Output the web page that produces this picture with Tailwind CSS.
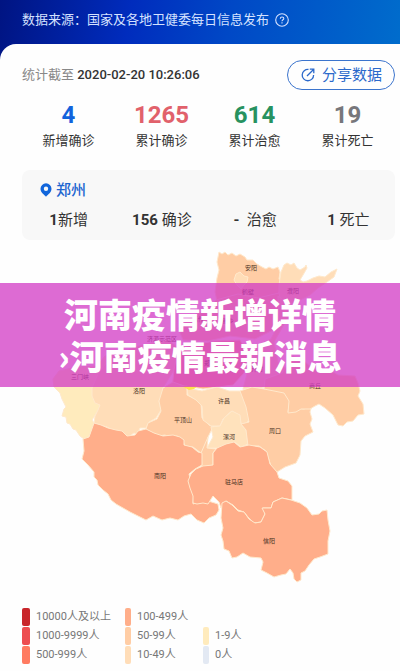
<!DOCTYPE html>
<html lang="zh-CN">
<head>
<meta charset="utf-8">
<meta name="viewport" content="width=device-width, initial-scale=1">
<title>河南疫情新增详情</title>
<script src="https://cdn.jsdelivr.net/npm/@tailwindcss/browser@4"></script>
</head>
<body class="bg-[#0030ad] font-[Roboto,'Noto_Sans_CJK_SC',sans-serif] text-[#333]">
<div class="relative min-h-screen bg-[linear-gradient(100deg,#001482_0px,#002cbd_130px,#0048c6_230px,#006ccc_400px)]">
  <header class="flex h-11 items-center gap-1.5 px-[22px] pb-1 text-[13px] text-[#d5e2ff]">
    <p>数据来源：国家及各地卫健委每日信息发布</p>
    <button type="button" aria-label="数据说明">
      <svg class="size-3.5" viewBox="0 0 14 14" fill="none" stroke="currentColor" stroke-width="1.1"><circle cx="7" cy="7" r="6.3"/><path d="M5.3 5.7c0-2.4 3.5-2.2 3.5-.2C8.800 6.800 7 6.800 7 8.300M7 9.300v1.200"/></svg>
    </button>
  </header>

  <main class="rounded-tl-2xl bg-[#fefefe] pt-4">
    <div class="flex items-center justify-between pr-[5px] pl-[22px]">
      <p class="text-[13px] text-[#888]">统计截至 <time class="font-medium text-[#333]" datetime="2020-02-20T10:26:06">2020-02-20 10:26:06</time></p>
      <button type="button" class="flex h-[30px] items-center gap-1.5 rounded-full border border-[#3b74cd] px-3 text-[15px] text-[#2b69cb]">
        <svg class="size-4" viewBox="0 0 16 16" fill="none" stroke="currentColor" stroke-width="1.300"><path d="M8.500 2.400A5.700 5.700 0 1 0 13.600 8M7 9 13.300 2.700M9.800 2.200h4v4"/></svg>
        分享数据
      </button>
    </div>

    <dl class="mt-[9px] grid grid-cols-4 pr-1.5 pl-[22px] text-center">
      <div class="flex flex-col-reverse"><dt class="text-[13px] leading-5">新增确诊</dt><dd class="text-2xl leading-8 font-bold text-[#1263dc]">4</dd></div>
      <div class="flex flex-col-reverse"><dt class="text-[13px] leading-5">累计确诊</dt><dd class="text-2xl leading-8 font-bold text-[#e1616b]">1265</dd></div>
      <div class="flex flex-col-reverse"><dt class="text-[13px] leading-5">累计治愈</dt><dd class="text-2xl leading-8 font-bold text-[#279260]">614</dd></div>
      <div class="flex flex-col-reverse"><dt class="text-[13px] leading-5">累计死亡</dt><dd class="text-2xl leading-8 font-bold text-[#77777b]">19</dd></div>
    </dl>

    <section class="mt-[19px] mr-[5px] ml-[22px] rounded-lg bg-[#f8f8f8] pt-2 pb-1.5">
      <h2 class="flex items-center gap-1 pl-[18px] text-[15px] leading-6 font-medium text-[#1e66d0]">
        <svg class="h-3.5 w-3" viewBox="0 0 12 14" fill="#1266db"><path fill-rule="evenodd" d="M6 .3A5.500 5.500 0 0 0 .5 5.800C.5 9.300 3.700 11.500 6 13.700 8.300 11.500 11.500 9.300 11.500 5.800A5.500 5.500 0 0 0 6 .3ZM6 3.600A2.200 2.200 0 1 1 6 8 2.200 2.200 0 0 1 6 3.600Z"/></svg>
        郑州
      </h2>
      <ul class="mt-1 grid grid-cols-4 text-center text-[15px] leading-7">
        <li><b>1</b>新增</li>
        <li><b>156</b> 确诊</li>
        <li><b>-</b>&nbsp; 治愈</li>
        <li><b>1</b> 死亡</li>
      </ul>
    </section>

    <svg class="block w-full" viewBox="0 240 400 364" role="img" aria-label="河南省疫情地图">
      <g stroke="#ffe9cc" stroke-width="1" stroke-linejoin="round">
        <polygon fill="#ffcda5" points="219,252 222,254 225,252 228,255 232,253 236,256 240,254 245,257 247,260 253,260 257,264 262,267 266,269 269,267 273,269 278,267 280,272 279,279 282,283 278,296 260,304 240,300 218,306 215,292 217,278 219,270 217,262"/>
        <polygon fill="#ffddb8" points="281,272 284,265 287,263 291,265 294,263 297,268 300,270 305,267 306,265 307,268 303,275 300,280 303,282 307,281 313,278 319,276 325,277 331,272 337,269 334,277 327,282 318,288 310,295 296,302 283,308 279,299 279,285"/>
        <polygon fill="#ffddb8" points="236,274 240,272 244,276 248,277 247,282 244,285 241,289 237,285 234,280"/>
        <polygon fill="#ffcda5" points="216,300 238,294 258,298 279,293 283,313 275,329 255,339 230,336 208,341 183,340 178,328 192,316 206,309"/>
        <polygon fill="#ffddb8" points="278,296 288,304 290,314 282,328 274,342 278,362 288,371 278,380 262,388 243,389 248,370 246,350 271,339 279,323"/>
        <polygon fill="#ffebbd" points="54,387 53,379 59,371 77,367 97,366 105,356 124,353 134,366 98,388 100,406 97,412 92,420 94,423 92,430 89,437 84,439 80,436 76,430 73,429 70,424 67,423 66,417 62,416 64,409 66,407 62,399 60,393"/>
        <polygon fill="#ffddb8" points="92,388 98,374 108,361 134,347 168,340 178,348 174,370 163,388 162,395 159,401 161,410 156,418 149,422 146,428 140,428 137,434 134,433 128,437 123,432 113,430 107,427 100,425 94,423 95,416 98,410 100,405 95,403 92,396"/>
        <polygon fill="#ffae8a" points="174,370 178,348 192,345 215,341 240,340 249,355 244,373 233,385 203,389 186,386 172,389"/>
        <polygon fill="#ffcda5" points="163,388 173,382 187,387 187,395 195,399 201,404 202,418 209,425 213,427 208,437 206,446 201,453 193,447 185,446 182,439 177,436 171,438 165,435 158,436 151,432 146,429 148,423 157,419 161,411 159,401"/>
        <polygon fill="#ffddb8" points="187,388 202,391 217,387 229,391 240,391 247,394 247,406 249,419 247,423 241,424 240,417 232,411 228,414 223,419 220,426 211,426 203,420 202,406 196,400 188,395"/>
        <polygon fill="#ffe2bc" points="232,411 240,415 241,424 246,430 248,444 241,447 235,442 227,444 218,448 207,448 213,437 211,427 220,426 224,418"/>
        <polygon fill="#ffcda5" points="208,437 207,448 216,449 213,453 213,465 202,468 201,453"/>
        <polygon fill="#ffcda5" points="240,391 252,387 264,389 274,386 285,391 290,399 288,412 295,408 304,409 312,405 310,412 312,419 310,424 313,432 305,436 301,441 300,455 296,463 285,467 277,472 272,469 269,460 266,451 259,446 248,446 246,430 241,424 249,422 246,407"/>
        <polygon fill="#ffcda5" points="264,389 265,379 282,373 293,356 303,360 314,370 328,369 338,375 355,376 358,383 360,391 358,396 363,404 364,414 358,415 353,421 347,422 343,426 338,425 333,415 325,408 319,404 315,406 310,409 301,409 296,412 288,413 289,401 284,393"/>
        <polygon fill="#ffae8a" points="94,423 101,425 108,428 116,430 122,431 127,436 135,435 138,431 146,429 154,433 163,436 173,435 180,437 184,440 184,445 192,447 198,452 202,453 202,465 195,469 189,474 191,482 194,490 193,504 205,500 218,504 219,510 216,515 209,518 204,523 197,520 191,514 184,516 178,520 170,518 162,520 153,516 146,520 138,516 130,512 123,508 116,504 111,500 108,494 103,490 98,485 97,480 94,477 94,472 88,465 82,459 84,451 83,439 89,437"/>
        <polygon fill="#ffae8a" points="213,453 217,448 226,444 234,442 240,447 249,445 260,447 267,452 270,464 277,472 279,478 288,481 292,486 292,500 282,498 273,502 271,508 263,508 265,514 261,522 254,523 248,517 244,512 238,510 233,505 226,501 221,508 219,502 213,496 208,504 203,503 197,504 193,503 193,496 190,488 188,481 191,474 196,469 203,466 213,465"/>
        <polygon fill="#ffae8a" points="222,503 226,501 232,505 238,511 244,512 249,519 255,523 261,522 265,514 262,508 271,508 273,502 282,498 291,500 300,503 307,508 312,515 319,514 322,511 327,510 328,520 330,531 328,541 328,554 320,557 314,559 309,565 305,571 301,573 301,580 297,582 294,579 293,573 290,569 286,574 281,575 274,577 267,573 261,570 263,562 261,558 250,557 243,553 237,557 232,558 229,551 224,549 223,541 221,535 223,528 221,518"/>
        <polygon fill="#ffe44d" stroke="none" points="182,386 189,390 194,389 198,386"/>
      </g>
      <g class="font-['Noto_Sans_CJK_SC',sans-serif] text-[6px]" text-anchor="middle" fill="#493022">
        <text x="251" y="270">安阳</text><text x="248" y="294">鹤壁</text><text x="293" y="293">濮阳</text>
        <text x="198" y="321">焦作</text><text x="228" y="323">新乡</text><text x="162" y="341">济源示范区</text>
        <text x="210" y="365">郑州</text><text x="257" y="371">开封</text><text x="80" y="379">三门峡</text>
        <text x="315" y="388">商丘</text><text x="139" y="393">洛阳</text><text x="224" y="403">许昌</text>
        <text x="183" y="422">平顶山</text><text x="275" y="433">周口</text><text x="229" y="439">漯河</text>
        <text x="160" y="478">南阳</text><text x="234" y="484">驻马店</text><text x="269" y="543">信阳</text>
      </g>
    </svg>

    <ul class="grid grid-flow-col grid-cols-[103px_78px_auto] grid-rows-3 gap-y-px px-[22px] pt-1 pb-2 text-[11px] leading-[18px] text-[#777]">
      <li class="flex gap-1.5"><i class="w-2 rounded-xs bg-[#c9262b]"></i>10000人及以上</li>
      <li class="flex gap-1.5"><i class="w-2 rounded-xs bg-[#ed4d50]"></i>1000-9999人</li>
      <li class="flex gap-1.5"><i class="w-2 rounded-xs bg-[#ff7b61]"></i>500-999人</li>
      <li class="flex gap-1.5"><i class="w-1.5 rounded-xs bg-[#ffae8a]"></i>100-499人</li>
      <li class="flex gap-1.5"><i class="w-1.5 rounded-xs bg-[#ffcda5]"></i>50-99人</li>
      <li class="flex gap-1.5"><i class="w-1.5 rounded-xs bg-[#ffddb8]"></i>10-49人</li>
      <li class="row-start-2 flex gap-1.5"><i class="w-1.5 rounded-xs bg-[#ffebbd]"></i>1-9人</li>
      <li class="row-start-3 flex gap-1.5"><i class="w-1.5 rounded-xs bg-[#e3e9f3]"></i>0人</li>
    </ul>
  </main>

  <h1 class="absolute inset-x-0 top-[283px] flex h-[104px] flex-col items-center justify-center bg-[#d239c4]/75 font-['Noto_Sans_CJK_SC',sans-serif] text-[34px] leading-[42px] font-black whitespace-nowrap text-white">
    <span>河南疫情新增详情</span>
    <span>›河南疫情最新消息</span>
  </h1>
</div>
</body>
</html>
